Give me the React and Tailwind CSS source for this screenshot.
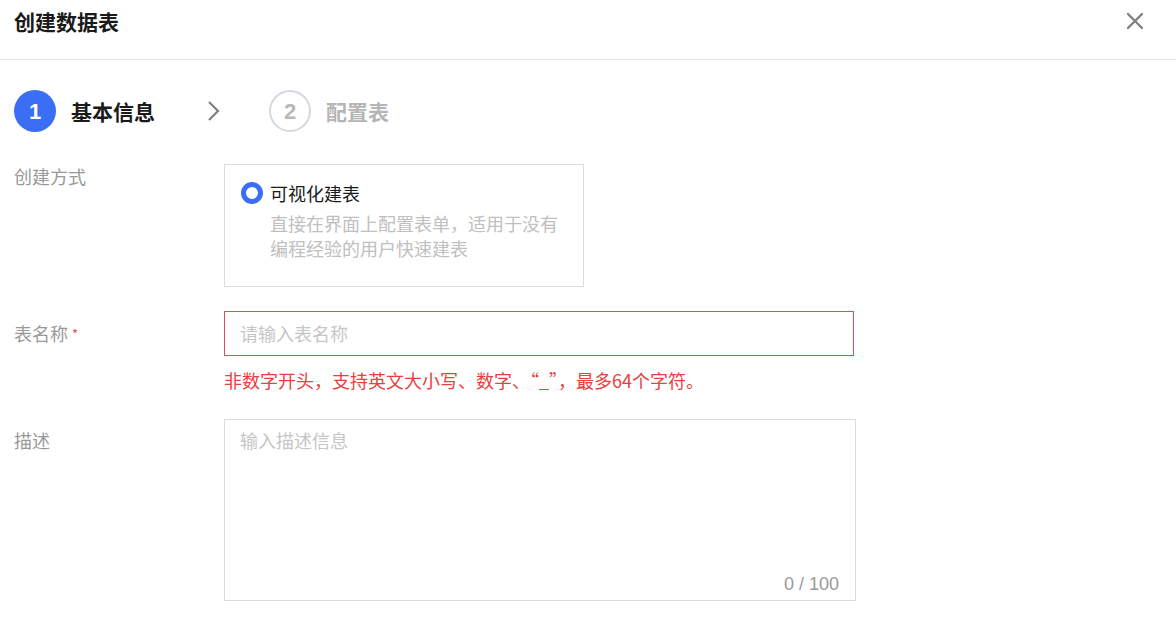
import React from "react";

export default function App() {
  return (
    <div className="w-[1176px] h-[640px] bg-white overflow-hidden font-['Microsoft_YaHei','Noto_Sans_CJK_SC',sans-serif] text-[#1f1f1f]">
      {/* Header */}
      <div className="h-[60px] border-b border-[#e7e7e7] flex items-start justify-between pl-[14px] pr-[32px] pt-[10px]">
        <div className="text-[21px] leading-[22px] font-bold text-[#1a1a1a]">创建数据表</div>
        <svg width="18" height="18" viewBox="0 0 18 18" className="mt-[2px]" fill="none">
          <path d="M2 2 L16 16 M16 2 L2 16" stroke="#808080" strokeWidth="2.4" strokeLinecap="round" />
        </svg>
      </div>

      {/* Steps */}
      <div className="flex items-center pl-[14px] mt-[30px] h-[42px]">
        <div className="flex items-center w-[193px]">
          <div className="w-[42px] h-[42px] rounded-full bg-[#3a6ff5] flex items-center justify-center text-white text-[22px] font-bold font-['Liberation_Sans',sans-serif]">1</div>
          <div className="ml-[15px] text-[21px] font-bold text-[#1a1a1a] leading-none">基本信息</div>
        </div>
        <svg width="14" height="22" viewBox="0 0 14 22" fill="none">
          <path d="M2 2 L11 11 L2 20" stroke="#7f7f7f" strokeWidth="2.2" />
        </svg>
        <div className="ml-[48px] flex items-center">
          <div className="w-[42px] h-[42px] rounded-full border-2 border-[#d4d8df] flex items-center justify-center text-[#b8b8b8] text-[22px] font-bold font-['Liberation_Sans',sans-serif]">2</div>
          <div className="ml-[15px] text-[21px] font-bold text-[#b5b5b5] leading-none">配置表</div>
        </div>
      </div>

      {/* Form */}
      <div className="px-[14px] mt-[32px]">
        {/* Row 1 */}
        <div className="flex">
          <div className="w-[210px] text-[18px] leading-[24px] text-[#999999]">创建方式</div>
          <div className="w-[360px] h-[123px] border border-[#dcdcdc] pl-[16px] pt-[16px]">
            <div className="flex items-center h-[24px]">
              <div className="w-[22px] h-[22px] rounded-full border-[5px] border-[#3a6ff5] bg-white"></div>
              <div className="ml-[7px] text-[18px] leading-[24px] text-[#1a1a1a]">可视化建表</div>
            </div>
            <div className="ml-[29px] mt-[6px] w-[300px] text-[18px] leading-[25px] text-[#c0c0c0]">
              直接在界面上配置表单，适用于没有编程经验的用户快速建表
            </div>
          </div>
        </div>

        {/* Row 2 */}
        <div className="flex mt-[24px]">
          <div className="w-[210px] pt-[10px] text-[18px] leading-[24px] text-[#999999] flex items-start">
            表名称<span className="ml-[4px] text-[13px] leading-[26px] text-[#e34d59]">*</span>
          </div>
          <div>
            <div className="w-[630px] h-[45px] border border-[#e34d59] flex items-center pl-[15px] text-[18px] text-[#c6c6c6]">请输入表名称</div>
            <div className="mt-[12px] text-[18px] leading-[24px] text-[#e8403d]">非数字开头，支持英文大小写、数字、“_”，最多64个字符。</div>
          </div>
        </div>

        {/* Row 3 */}
        <div className="flex mt-[27px]">
          <div className="w-[210px] pt-[9px] text-[18px] leading-[24px] text-[#999999]">描述</div>
          <div className="w-[632px] h-[182px] border border-[#dcdcdc] flex flex-col justify-between pl-[15px] pr-[16px] pt-[8px] pb-[4px]">
            <div className="text-[18px] leading-[24px] text-[#c6c6c6]">输入描述信息</div>
            <div className="self-end text-[18px] leading-[24px] text-[#999999] font-['Liberation_Sans',sans-serif]">0 / 100</div>
          </div>
        </div>
      </div>
    </div>
  );
}
